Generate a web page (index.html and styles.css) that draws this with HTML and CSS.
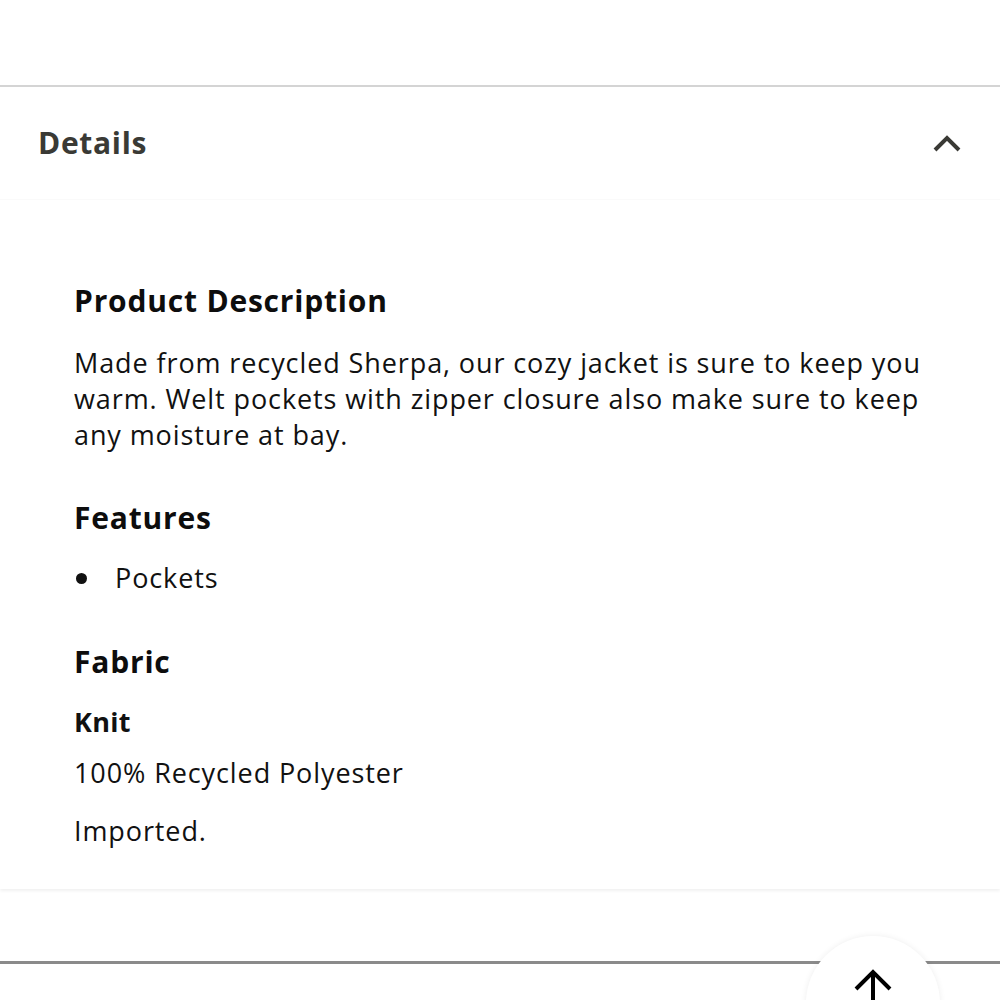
FILE: index.html
```html
<!DOCTYPE html>
<html>
<head>
<meta charset="utf-8">
<link rel="stylesheet" href="styles.css">
</head>
<body>
<div class="top-space"></div>
<section class="accordion">
  <header class="acc-head">
    <h2 class="acc-title">Details</h2>
    <svg class="chevron" width="30" height="20" viewBox="0 0 30 20"><path d="M3 16 L15 4 L27 16" fill="none" stroke="#3a3a35" stroke-width="4"/></svg>
  </header>
  <div class="acc-body">
    <h3 class="h">Product Description</h3>
    <p class="text">Made from recycled Sherpa, our cozy jacket is sure to keep you warm. Welt pockets with zipper closure also make sure to keep any moisture at bay.</p>
    <h3 class="h h-features">Features</h3>
    <ul class="list">
      <li>Pockets</li>
    </ul>
    <h3 class="h h-fabric">Fabric</h3>
    <h4 class="sub">Knit</h4>
    <p class="text one">100% Recycled Polyester</p>
    <p class="text imported">Imported.</p>
  </div>
</section>
<div class="bottom">
  <div class="bottom-line"></div>
  <div class="to-top" role="button" aria-label="Back to top">
    <svg width="40" height="40" viewBox="0 0 40 40"><path d="M20 40 V5 M3 21 L20 4 L37 21" fill="none" stroke="#000" stroke-width="4"/></svg>
  </div>
</div>
</body>
</html>
```
FILE: styles.css
```css
* { box-sizing: border-box; }
html, body { margin: 0; padding: 0; background: #fff; }
body { font-family: "Open Sans", "Liberation Sans", sans-serif; color: #111; height: 1000px; overflow: hidden; }
.top-space { height: 87px; border-bottom: 2px solid #d4d4d4; }
.accordion { background: #fff; box-shadow: 0 2px 3px rgba(0,0,0,0.06); }
.acc-head { display: flex; align-items: center; justify-content: space-between; height: 112px; padding: 0 38px; box-shadow: 0 1px 1px rgba(0,0,0,0.02); }
.acc-title { margin: 0; font-size: 30px; font-weight: 700; color: #3a3a35; letter-spacing: 0.7px; line-height: 40px; }
.chevron { margin-top: 2px; }
.acc-body { padding: 84px 74px 40px; }
.h { margin: 0; font-size: 30px; font-weight: 700; color: #0d0d0d; line-height: 36px; letter-spacing: 0.8px; }
.text { margin: 26px 0 0; font-size: 27px; line-height: 36px; color: #111; letter-spacing: 0.9px; }
.h-features { margin-top: 47px; }
.list { margin: 24px 0 0; padding: 0; list-style: none; font-size: 27px; line-height: 36px; letter-spacing: 0.9px; }
.list li { position: relative; padding-left: 41px; }
.list li::before { content: ""; position: absolute; left: 2px; top: 13px; width: 11px; height: 11px; border-radius: 50%; background: #111; }
.h-fabric { margin-top: 48px; }
.sub { margin: 24px 0 0; font-size: 27px; font-weight: 700; line-height: 36px; letter-spacing: 0.3px; }
.text.one { margin-top: 15px; }
.text.imported { margin-top: 22px; }
.bottom { position: relative; height: 110px; padding-top: 72px; }
.bottom-line { height: 3px; background: #8a8a8a; }
.to-top { position: absolute; left: 806px; top: 47px; width: 134px; height: 134px; border-radius: 50%; background: #fff; box-shadow: 0 0 6px rgba(0,0,0,0.07); display: flex; justify-content: center; align-items: flex-start; padding-top: 32px; }
```
